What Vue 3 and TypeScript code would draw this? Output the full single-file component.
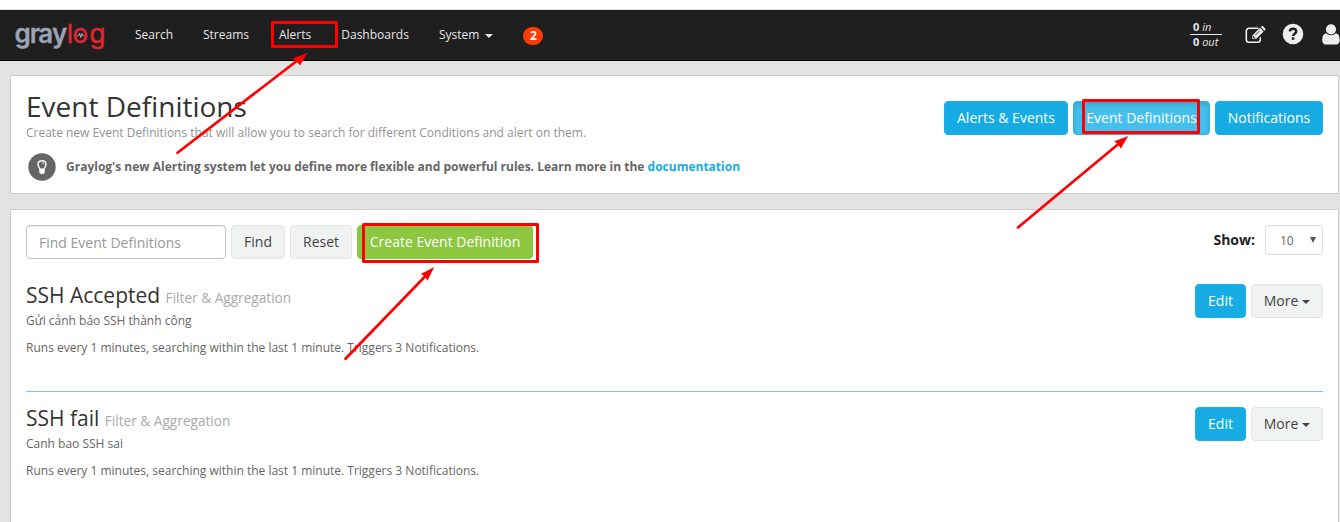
<script setup lang="ts">
interface EventDefinition {
  title: string
  description: string
  schedule: string
}

const schedule = 'Runs every 1 minutes, searching within the last 1 minute. Triggers 3 Notifications.'

const definitions: EventDefinition[] = [
  { title: 'SSH Accepted', description: 'Gửi cảnh báo SSH thành công', schedule },
  { title: 'SSH fail', description: 'Canh bao SSH sai', schedule },
]
</script>

<template>
  <div class="page">
    <nav class="navbar">
      <svg class="logo" width="92" height="30" viewBox="0 0 92 30">
        <text class="logo-gray" x="-.500 14.700 23.200 37" y="21.700">gray</text>
        <text class="logo-log" x="51.800 57.500 74.400" y="21.700">log</text>
        <path d="M62.200 14.700h1.400l1-2.400 1.200 4.400 1.100-4.200.8 2.200h1.200" fill="none" stroke="#c9cdd6" stroke-width=".8" />
      </svg>
      <div class="links">
        <span>Search</span>
        <span>Streams</span>
        <span>Alerts</span>
        <span>Dashboards</span>
        <span class="system">System<i class="caret"></i></span>
      </div>
      <span class="badge">2</span>
      <div class="right">
        <div class="throughput">
          <div><b>0</b> <em>in</em></div>
          <div class="out"><b>0</b> <em>out</em></div>
        </div>
        <svg class="edit" width="21" height="18" viewBox="0 0 21 18">
          <path d="M13.5 2.3H4A2.7 2.7 0 0 0 1.3 5v8.6a2.7 2.7 0 0 0 2.7 2.7h8.6a2.7 2.7 0 0 0 2.7-2.7v-2.4" fill="none" stroke="#eee" stroke-width="1.6" />
          <path d="M7.3 9.4 15 1.7l3.7 3.7-7.7 7.7H7.3z" fill="#eee" />
          <path d="m15.8.9.7-.6q.8-.6 1.6 0l2.1 2.1q.6.8 0 1.6l-.7.7z" fill="#eee" />
          <path d="M8.5 9.9v2h2M10.2 9.3l4.6-4.6" fill="none" stroke="#1f1f1f" stroke-width=".9" />
        </svg>
        <svg class="help" width="22" height="22" viewBox="0 0 22 22">
          <circle cx="11" cy="11" r="10.3" fill="#eee" />
          <path d="M7.7 8.3C8.2 6.5 9.4 5.8 11 5.8c1.9 0 3.2 1 3.2 2.6 0 2.3-3.1 2.2-3.1 4.7" fill="none" stroke="#1f1f1f" stroke-width="2.5" />
          <path d="M9.8 14.3h2.6v2.5H9.8z" fill="#1f1f1f" />
        </svg>
        <svg class="user" width="18" height="21" viewBox="0 0 18 21">
          <path d="M4 9.2C1.300 9.600.2 12 .2 16.300.2 19 1.500 20.500 3.600 20.500h10.600c2.200 0 3.500-1.500 3.500-4.200 0-4.300-1.200-6.700-3.800-7.100-1.300 1.300-3 2-4.900 2S5.300 10.500 4 9.200z" fill="#eee" />
          <circle cx="9" cy="5.300" r="5.100" fill="#eee" />
        </svg>
      </div>
    </nav>

    <section class="panel header">
      <div>
        <h1>Event Definitions</h1>
        <p class="lead">Create new Event Definitions that will allow you to search for different Conditions and alert on them.</p>
        <div class="support">
          <svg width="28" height="28" viewBox="0 0 28 28">
            <circle cx="14" cy="14" r="13.700" fill="#666" />
            <path d="M11.900 16.300c0-1.800-1.900-2.600-1.900-4.700 0-2.400 1.700-3.800 4-3.800s4 1.400 4 3.800c0 2.100-1.900 2.900-1.900 4.700z" fill="none" stroke="#fff" stroke-width="1.400" />
            <path d="M11.300 16.300h5.400v3.200l-1.400 1.500h-2.600l-1.400-1.500z" fill="#fff" />
            <path d="M14 9.800q1.700 0 2 1.600" fill="none" stroke="#fff" stroke-width=".9" />
          </svg>
          <strong>Graylog's new Alerting system let you define more flexible and powerful rules. Learn more in the <a>documentation</a></strong>
        </div>
      </div>
      <div class="tabs">
        <button class="btn info w-alerts">Alerts &amp; Events</button>
        <button class="btn info active w-defs">Event Definitions</button>
        <button class="btn info w-notif">Notifications</button>
      </div>
    </section>

    <section class="panel list">
      <div class="toolbar">
        <input class="search" type="text" placeholder="Find Event Definitions" />
        <button class="btn w-find">Find</button>
        <button class="btn w-reset">Reset</button>
        <button class="btn success w-create">Create Event Definition</button>
        <div class="show">
          <label>Show:</label>
          <div class="select">10<svg width="6" height="6" viewBox="0 0 6 6"><path d="M0 0h6L3 6z" fill="#555" /></svg></div>
        </div>
      </div>
      <article v-for="item in definitions" :key="item.title" class="row">
        <div>
          <h2>{{ item.title }} <small>{{ 'Filter & Aggregation' }}</small></h2>
          <p class="description">{{ item.description }}</p>
          <p class="schedule">{{ item.schedule }}</p>
        </div>
        <div class="actions">
          <button class="btn info w-edit">Edit</button>
          <button class="btn w-more">More<i class="caret"></i></button>
        </div>
      </article>
    </section>

    <svg class="annotations" width="1340" height="522" viewBox="0 0 1340 522">
      <g fill="none" stroke="#f00" stroke-width="3" stroke-linejoin="round">
        <rect x="272.5" y="22.5" width="64" height="24" />
        <rect x="1083.5" y="100.5" width="115" height="32" />
        <rect x="363.5" y="224.5" width="174" height="37" />
      </g>
      <g stroke="#f00" stroke-width="2.700" stroke-linecap="round">
        <path d="M177.500 152.700 298 60M1018 227.500 1119 143.500M345.500 358.700 426 275.500" />
      </g>
      <g fill="#f00">
        <path d="m307.500 52.700-15 5.800 3 2.500 4.700 4.300z" />
        <path d="m1128.300 136-14 5.300 3 2.500 3.500 4.800z" />
        <path d="m434.300 267-13.500 7 3.500 2 3.200 4.600z" />
      </g>
    </svg>
  </div>
</template>

<style>
body {
  margin: 0;
  overflow: hidden;
}
</style>

<style scoped>
.page {
  position: relative;
  box-sizing: border-box;
  width: 1340px;
  height: 522px;
  padding-top: 9px;
  overflow: hidden;
  background: linear-gradient(#fff 9px, #e3e3e3 9px);
  color: #666;
  font: 12px/17px "Open Sans", "Noto Sans", sans-serif;
}
h1, h2, p { margin: 0; }
.navbar {
  display: flex;
  align-items: flex-start;
  box-sizing: border-box;
  height: 52px;
  border-top: 1px solid #e0e0e0;
  border-bottom: 1px solid #000;
  background: #1f1f1f;
  color: #e6e6e6;
}
.logo { flex: none; margin: 11px 0 0 15px; overflow: visible; }
.logo text { font-family: Inter, "Open Sans", sans-serif; font-size: 26px; }
.logo-gray { fill: #9ba3b5; stroke: #9ba3b5; stroke-width: .3px; font-weight: 600; }
.logo-log { fill: #e3262e; stroke: #e3262e; stroke-width: .5px; font-weight: 400; }
.links { display: flex; gap: 30px; margin: 15px 0 0 28px; line-height: 20px; font-size: 12px; font-weight: 500; }
.caret {
  display: inline-block;
  margin-left: 6px;
  border: 4px solid transparent;
  border-top-color: currentColor;
  border-bottom: 0;
  vertical-align: middle;
}
.badge {
  width: 20px;
  height: 18px;
  margin: 17px 0 0 30px;
  border-radius: 9px;
  background: #ff3b00;
  color: #fff;
  font-size: 12px;
  font-weight: 700;
  line-height: 18px;
  text-align: center;
}
.right { display: flex; flex: none; margin-left: auto; }
.throughput { width: 32px; margin: 9px 23px 0 0; font-size: 11px; font-weight: 500; line-height: 15px; white-space: nowrap; }
.throughput div { padding-left: 3px; }
.throughput .out { height: 15px; border-top: 1px solid #eee; line-height: 14px; }
.edit { margin: 16px 16px 0 0; }
.help { margin: 13px 18px 0 0; }
.user { margin: 14px 0 0; }
.panel {
  box-sizing: border-box;
  width: 1329px;
  margin-left: 10px;
  padding: 15px;
  border: 1px solid #cdcdcd;
  background: #fff;
}
.header { display: flex; justify-content: space-between; height: 119px; margin-top: 14px; }
h1 { color: #333; font-size: 28px; font-weight: 400; line-height: 31px; }
.lead { margin-top: 2px; color: #939393; }
.support { display: flex; align-items: center; gap: 10px; margin: 12px 0 0 2px; }
.support strong { margin-top: -2px; font-weight: 700; }
.support a { color: #16ace3; }
.tabs { display: flex; gap: 5px; margin-top: 10px; }
.btn {
  box-sizing: border-box;
  height: 34px;
  padding: 0;
  border: 1px solid #e3e5e5;
  border-radius: 4px;
  background: #f1f2f2;
  color: #444;
  font: 14px/20px "Open Sans", "Noto Sans", sans-serif;
  white-space: nowrap;
}
.info { border-color: #1bb0ea; background: #16ace3; color: #fff; }
.active { border-color: #2fb3e6; background: #45bfee; box-shadow: inset 0 3px 5px rgba(0, 0, 0, .125); }
.success { border-color: #8dc63f; background: #8dc63f; color: #fff; }
.w-alerts { width: 124px; }
.w-defs { width: 137px; }
.w-notif { width: 108px; }
.w-find { width: 54px; }
.w-reset { width: 62px; }
.w-create { width: 176px; }
.w-edit { width: 51px; }
.w-more { width: 72px; }
.w-more .caret { margin-left: 4px; }
.list { height: 340px; margin-top: 15px; }
.toolbar { display: flex; gap: 5px; height: 34px; }
.search {
  box-sizing: border-box;
  width: 200px;
  height: 34px;
  padding: 0 12px;
  border: 1px solid #c4c4c4;
  border-radius: 4px;
  box-shadow: inset 0 1px 1px rgba(0, 0, 0, .075);
  font: 14px/20px "Open Sans", "Noto Sans", sans-serif;
}
.search::placeholder { color: #999; }
.show { display: flex; gap: 10px; margin-left: auto; }
.show label { color: #1f1f1f; font-size: 14px; font-weight: 700; line-height: 30px; }
.select {
  display: flex;
  align-items: center;
  justify-content: space-between;
  box-sizing: border-box;
  width: 58px;
  height: 30px;
  padding: 0 6px 0 14px;
  border: 1px solid #dbdfe2;
  border-radius: 3px;
}
.row {
  display: flex;
  justify-content: space-between;
  box-sizing: border-box;
  height: 123px;
  padding-top: 15px;
}
.toolbar + .row { padding-top: 25px; height: 132px; }
.row + .row { border-top: 1px solid #6dcbf3; }
h2 { height: 22px; color: #333; font-size: 21px; font-weight: 400; line-height: 22px; }
small { color: #aaa; font-size: 65%; font-weight: 400; }
.description { margin-top: 6px; }
.schedule { margin-top: 10px; }
.actions { display: flex; gap: 5px; }
.annotations { position: absolute; inset: 0; pointer-events: none; }
</style>
